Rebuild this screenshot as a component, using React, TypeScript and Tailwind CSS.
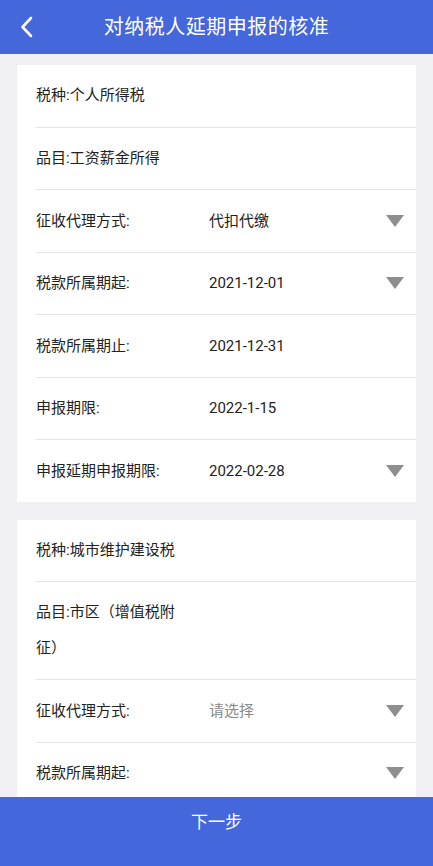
import React from "react";

type Row = {
  label: string;
  value?: string;
  placeholder?: string;
  select?: boolean;
  full?: boolean;
  narrow?: boolean;
};

const firstCard: Row[] = [
  { label: "税种:个人所得税", full: true },
  { label: "品目:工资薪金所得", full: true },
  { label: "征收代理方式:", value: "代扣代缴", select: true },
  { label: "税款所属期起:", value: "2021-12-01", select: true },
  { label: "税款所属期止:", value: "2021-12-31" },
  { label: "申报期限:", value: "2022-1-15" },
  { label: "申报延期申报期限:", value: "2022-02-28", select: true },
];

const secondCard: Row[] = [
  { label: "税种:城市维护建设税", full: true },
  { label: "品目:市区（增值税附征）", full: true, narrow: true },
  { label: "征收代理方式:", placeholder: "请选择", select: true },
  { label: "税款所属期起:", select: true },
];

function Caret() {
  return (
    <svg width="18" height="12" viewBox="0 0 18 12" className="shrink-0">
      <path d="M0 0 H18 L9 12 Z" fill="#8e8e8e" />
    </svg>
  );
}

function FormRow({ row, last }: { row: Row; last: boolean }) {
  return (
    <div className={"ml-[19px] flex items-center pr-[12px] " + (last ? "" : "border-b border-[#e4e4e8]")}>
      {row.full ? (
        <div className={"py-[13px] leading-[35.5px] " + (row.narrow ? "w-[152px]" : "")}>{row.label}</div>
      ) : (
        <div className="flex h-[61.5px] w-full items-center">
          <div className="w-[173px] shrink-0">{row.label}</div>
          <div className={"flex-1 " + (row.placeholder ? "text-[#8a8a8a]" : "")}>
            {row.value ?? row.placeholder ?? ""}
          </div>
          {row.select && <Caret />}
        </div>
      )}
    </div>
  );
}

function Card({ rows }: { rows: Row[] }) {
  return (
    <div className="mx-[17px] bg-white">
      {rows.map((r, i) => (
        <FormRow key={i} row={r} last={i === rows.length - 1} />
      ))}
    </div>
  );
}

export default function App() {
  return (
    <div
      className="flex h-[866px] flex-col overflow-hidden bg-[#efeff4] text-[15px] text-[#222]"
      style={{ fontFamily: 'Roboto, "Noto Sans CJK SC", sans-serif' }}
    >
      <div className="relative flex h-[54px] shrink-0 items-center justify-center bg-[#4467dc] text-white">
        <svg width="14" height="22" viewBox="0 0 14 22" className="absolute left-[20px] top-[16px]">
          <path d="M11 2 L2.5 11 L11 20" fill="none" stroke="white" strokeWidth="2.6" strokeLinecap="round" strokeLinejoin="round" />
        </svg>
        <span className="text-[20px] tracking-[0.5px]">对纳税人延期申报的核准</span>
      </div>
      <div className="flex min-h-0 flex-1 flex-col gap-[18px] overflow-hidden pt-[11px]">
        <Card rows={firstCard} />
        <Card rows={secondCard} />
      </div>
      <div className="flex h-[69px] shrink-0 justify-center bg-[#4467dc] pt-[13px] text-[17px] text-white">
        下一步
      </div>
    </div>
  );
}
